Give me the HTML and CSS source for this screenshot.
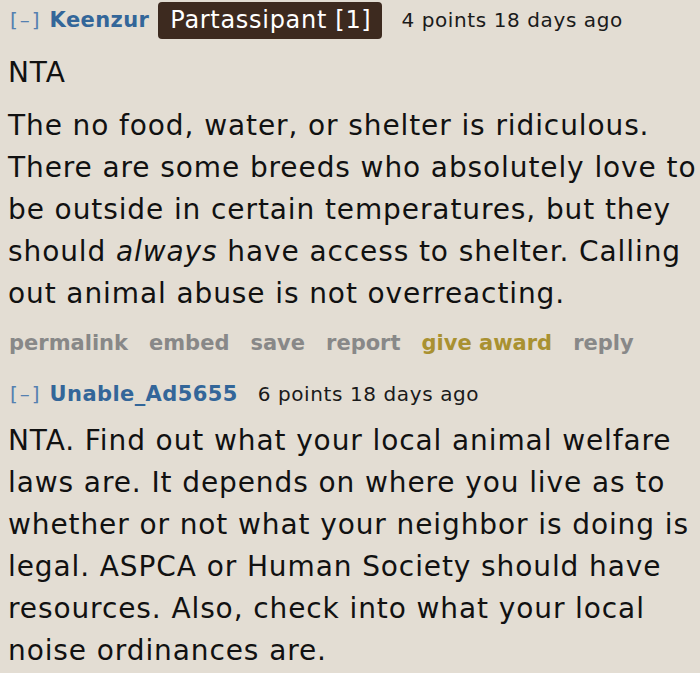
FILE: index.html
```html
<!DOCTYPE html>
<html>
<head>
<meta charset="utf-8">
<link rel="stylesheet" href="styles.css">
</head>
<body>
<div class="thread">
  <div class="comment first">
    <div class="tagline">
      <span class="expand">[–]</span>
      <span class="author">Keenzur</span>
      <span class="flair">Partassipant [1]</span>
      <span class="score">4 points 18 days ago</span>
    </div>
    <div class="md">
      <p>NTA</p>
      <p>The no food, water, or shelter is ridiculous.<br>There are some breeds who absolutely love to<br>be outside in certain temperatures, but they<br>should <em>always</em> have access to shelter. Calling<br>out animal abuse is not overreacting.</p>
    </div>
    <ul class="buttons">
      <li>permalink</li>
      <li>embed</li>
      <li>save</li>
      <li>report</li>
      <li class="award">give award</li>
      <li>reply</li>
    </ul>
  </div>
  <div class="comment second">
    <div class="tagline">
      <span class="expand">[–]</span>
      <span class="author">Unable_Ad5655</span>
      <span class="score">6 points 18 days ago</span>
    </div>
    <div class="md">
      <p>NTA. Find out what your local animal welfare<br>laws are. It depends on where you live as to<br>whether or not what your neighbor is doing is<br>legal. ASPCA or Human Society should have<br>resources. Also, check into what your local<br>noise ordinances are.</p>
    </div>
  </div>
</div>
</body>
</html>
```
FILE: styles.css
```css
html, body {
  margin: 0;
  padding: 0;
  background: #e3ddd3;
}
body {
  font-family: "DejaVu Sans", Verdana, sans-serif;
  color: #111;
  overflow: hidden;
}
.thread {
  padding: 0 0 0 8px;
}
.tagline {
  display: flex;
  align-items: center;
  height: 40px;
  font-size: 20px;
  white-space: nowrap;
}
.expand {
  color: #5580b0;
  margin-left: 2px;
  margin-right: 8px;
  letter-spacing: 2px;
}
.author {
  color: #336699;
  font-weight: bold;
  font-size: 21px;
  letter-spacing: 0.4px;
  margin-right: 9px;
}
.second .author {
  margin-right: 20px;
}
.flair {
  background: #3d2a1f;
  color: #fff;
  font-size: 24px;
  letter-spacing: 0.7px;
  border-radius: 4px;
  padding: 4px 11px 5px 12px;
  margin-right: 19px;
}
.score {
  color: #1a1a1a;
  letter-spacing: 0.6px;
}
.md {
  font-size: 28px;
  letter-spacing: 0.9px;
  line-height: 42px;
  white-space: nowrap;
}
.md p {
  margin: 11px 0 0 0;
}
.first .md p:first-child {
  margin-top: 12px;
}
.second .tagline {
  margin-top: 15px;
}
.second .md p:first-child {
  margin-top: 6px;
}
.buttons {
  list-style: none;
  display: flex;
  gap: 21px;
  margin: 12px 0 0 1px;
  padding: 0;
  font-size: 21px;
  font-weight: bold;
  color: #888;
  height: 32px;
  align-items: center;
}
.buttons .award {
  color: #a99131;
}
```
